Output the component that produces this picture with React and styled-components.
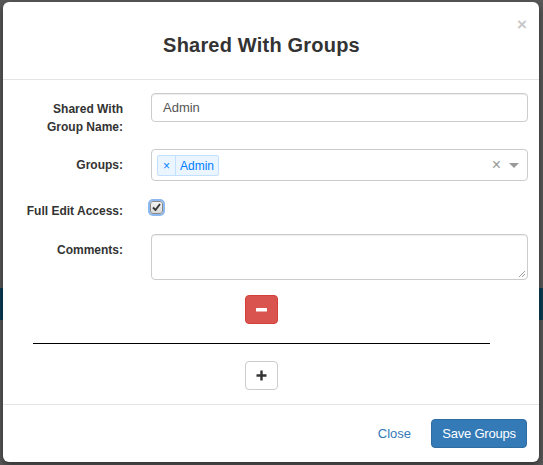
import React from 'react'
import styled, { createGlobalStyle } from 'styled-components'

const GlobalStyle = createGlobalStyle`
  html, body {
    margin: 0;
    padding: 0;
  }
  body {
    font-family: "Liberation Sans", Arial, sans-serif;
    color: #333;
    background: #4f4f4f;
  }
  * {
    box-sizing: border-box;
  }
`

const Backdrop = styled.div`
  width: 543px;
  height: 465px;
  padding: 2px 4px 3px 3px;
  background: linear-gradient(
    to bottom,
    #5a5a5a 0,
    #5a5a5a 288px,
    #0b3f58 288px,
    #0b3f58 320px,
    #5a5a5a 320px
  );
`

const Modal = styled.div`
  display: flex;
  flex-direction: column;
  width: 536px;
  height: 460px;
  background: #fff;
  border-radius: 6px;
  box-shadow: 0 3px 9px rgba(0, 0, 0, 0.5);
  position: relative;
`

const Header = styled.div`
  height: 78px;
  display: flex;
  align-items: center;
  justify-content: center;
  border-bottom: 1px solid #e5e5e5;
  padding: 10px 19px 0 0;
`

const Title = styled.h4`
  margin: 0;
  font-size: 20px;
  font-weight: 700;
  color: #333;
  letter-spacing: 0.2px;
`

const CloseX = styled.span`
  position: absolute;
  top: 14px;
  right: 12px;
  font-size: 17px;
  font-weight: 700;
  color: #c8c8c8;
  line-height: 1;
`

const Body = styled.div`
  flex: 1;
  padding: 13px 11px 0 22px;
`

const Row = styled.div`
  display: grid;
  grid-template-columns: 98px 1fr;
  column-gap: 28px;
  margin-bottom: ${p => p.$mb || 0}px;
`

const Label = styled.label`
  text-align: right;
  font-size: 12px;
  font-weight: 700;
  line-height: 18px;
  padding-top: 7px;
  color: #333;
`

const TextInput = styled.div`
  height: 29px;
  border: 1px solid #ccc;
  border-radius: 4px;
  padding: 0 11px;
  display: flex;
  align-items: center;
  font-size: 13px;
  color: #555;
  box-shadow: inset 0 1px 1px rgba(0, 0, 0, 0.075);
`

const SelectBox = styled.div`
  height: 32px;
  border: 1px solid #ccc;
  border-radius: 4px;
  padding: 0 8px 0 5px;
  display: flex;
  align-items: center;
`

const Tag = styled.div`
  display: flex;
  height: 21px;
  margin-top: 1px;
  border: 1px solid #c2e0ff;
  background: #ebf5ff;
  border-radius: 2px;
  color: #007eff;
  font-size: 12px;
`

const TagRemove = styled.span`
  width: 18px;
  display: flex;
  align-items: center;
  justify-content: center;
  border-right: 1px solid #c2e0ff;
  font-size: 12px;
`

const TagLabel = styled.span`
  display: flex;
  align-items: center;
  padding: 0 4px;
`

const SelectTools = styled.div`
  margin-left: auto;
  display: flex;
  align-items: center;
  gap: 8px;
  color: #999;
`

const ClearX = styled.span`
  font-size: 16px;
  line-height: 1;
  color: #999;
`

const Caret = styled.span`
  width: 0;
  height: 0;
  border-left: 5px solid transparent;
  border-right: 5px solid transparent;
  border-top: 5px solid #999;
`

const CheckWrap = styled.div`
  padding-top: 2px;
`

const Check = styled.span`
  display: inline-flex;
  align-items: center;
  justify-content: center;
  width: 13px;
  height: 13px;
  margin-left: -1px;
  border-radius: 3px;
  background: linear-gradient(#f4f4f4, #d8d8d8);
  border: 1px solid #8a8a8a;
  box-shadow: 0 0 0 2px #8ab8ef;
`

const TextArea = styled.div`
  height: 46px;
  border: 1px solid #ccc;
  border-radius: 4px;
  position: relative;
  box-shadow: inset 0 1px 1px rgba(0, 0, 0, 0.075);
`

const Grip = styled.svg`
  position: absolute;
  right: 1px;
  bottom: 1px;
`

const Center = styled.div`
  display: flex;
  justify-content: center;
  width: 457px;
  margin-left: 8px;
  margin-top: ${p => p.$mt || 0}px;
`

const IconButton = styled.div`
  width: 33px;
  height: 29px;
  border-radius: 4px;
  display: flex;
  align-items: center;
  justify-content: center;
  background: ${p => (p.$danger ? '#d9534f' : '#fff')};
  border: 1px solid ${p => (p.$danger ? '#d43f3a' : '#ccc')};
`

const Divider = styled.hr`
  width: 457px;
  margin: 19px 0 0 8px;
  border: 0;
  border-top: 1px solid #000;
`

const Footer = styled.div`
  height: 58px;
  border-top: 1px solid #e5e5e5;
  display: flex;
  align-items: center;
  justify-content: flex-end;
  padding: 0 12px 0 15px;
  gap: 20px;
`

const LinkButton = styled.span`
  color: #337ab7;
  font-size: 13px;
`

const PrimaryButton = styled.div`
  height: 29px;
  width: 96px;
  border-radius: 4px;
  background: #337ab7;
  border: 1px solid #2e6da4;
  color: #fff;
  font-size: 13px;
  letter-spacing: -0.2px;
  display: flex;
  align-items: center;
  justify-content: center;
`

export default function App() {
  return (
    <>
      <GlobalStyle />
      <Backdrop>
        <Modal>
          <CloseX>×</CloseX>
          <Header>
            <Title>Shared With Groups</Title>
          </Header>
          <Body>
            <Row $mb={13}>
              <Label>
                Shared With
                <br />
                Group Name:
              </Label>
              <TextInput>Admin</TextInput>
            </Row>
            <Row $mb={14}>
              <Label>Groups:</Label>
              <SelectBox>
                <Tag>
                  <TagRemove>×</TagRemove>
                  <TagLabel>Admin</TagLabel>
                </Tag>
                <SelectTools>
                  <ClearX>×</ClearX>
                  <Caret />
                </SelectTools>
              </SelectBox>
            </Row>
            <Row $mb={14}>
              <Label>Full Edit Access:</Label>
              <CheckWrap>
                <Check>
                  <svg width="9" height="8" viewBox="0 0 9 8">
                    <path d="M1 4.5 L3.5 7 L8 1" fill="none" stroke="#333" strokeWidth="1.8" />
                  </svg>
                </Check>
              </CheckWrap>
            </Row>
            <Row>
              <Label>Comments:</Label>
              <TextArea>
                <Grip width="8" height="8" viewBox="0 0 8 8">
                  <path d="M7 1 L1 7 M7 4 L4 7" stroke="#888" strokeWidth="0.8" />
                </Grip>
              </TextArea>
            </Row>
            <Center $mt={15}>
              <IconButton $danger>
                <svg width="11" height="4" viewBox="0 0 11 4">
                  <rect x="0" y="0" width="11" height="3.5" rx="0.5" fill="#fff" />
                </svg>
              </IconButton>
            </Center>
            <Divider />
            <Center $mt={17}>
              <IconButton>
                <svg width="11" height="11" viewBox="0 0 11 11">
                  <path d="M5.5 0.5 V10.5 M0.5 5.5 H10.5" stroke="#333" strokeWidth="2.4" />
                </svg>
              </IconButton>
            </Center>
          </Body>
          <Footer>
            <LinkButton>Close</LinkButton>
            <PrimaryButton>Save Groups</PrimaryButton>
          </Footer>
        </Modal>
      </Backdrop>
    </>
  )
}
